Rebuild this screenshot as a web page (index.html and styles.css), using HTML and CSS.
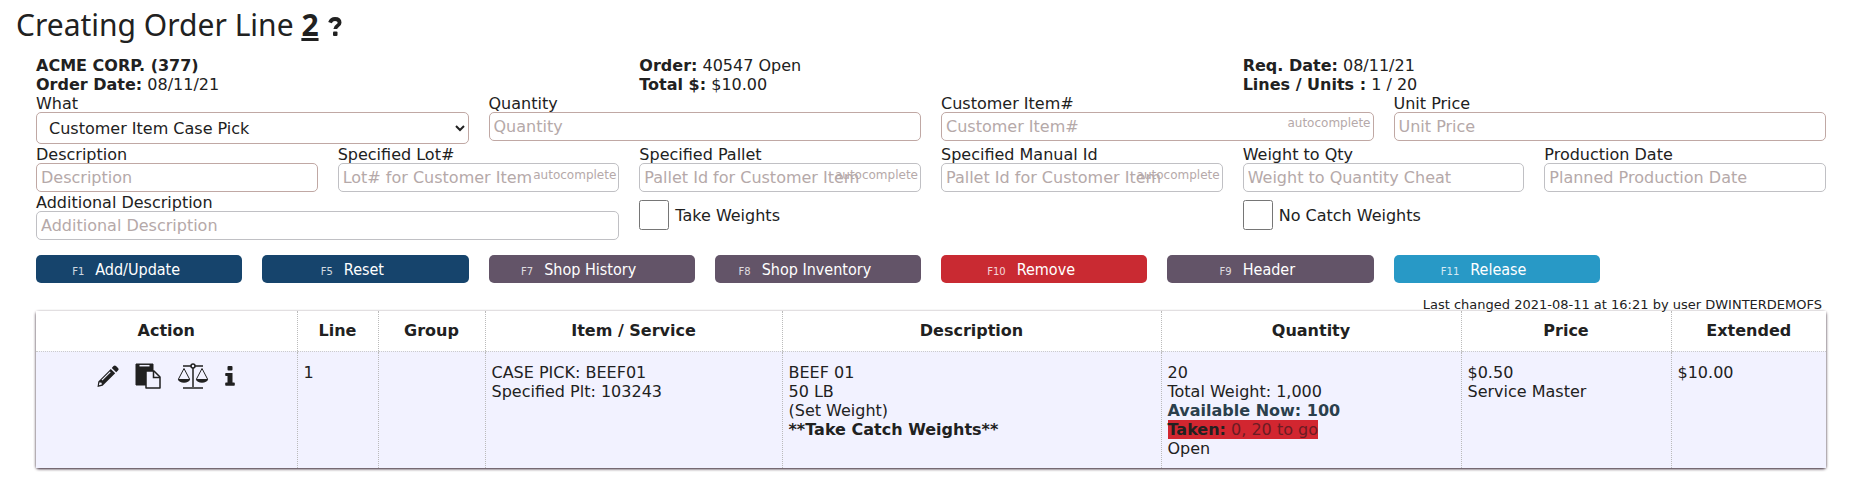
FILE: index.html
```
<!DOCTYPE html>
<html lang="en">
<head>
  <meta charset="UTF-8">
  <meta name="viewport" content="width=device-width, initial-scale=1.0">
  <title>Creating Order Line</title>
  <link rel="stylesheet" href="styles.css">
</head>
<body>
  <h1>Creating Order Line <b class="line-no">2</b>
    <a class="help" href="#" aria-label="Help"><svg width="14" height="19" viewBox="0 0 14 19"><path d="M2 5.6C3 3 4.800 2 7 2c2.800 0 4.600 1.400 4.600 3.700 0 3.300-4.300 2.800-4.300 6.300" fill="none" stroke="#212121" stroke-width="3.800"/><rect x="5" y="14.500" width="4.500" height="4.500" rx="1" fill="#212121"/></svg></a>
  </h1>

  <form class="order-form">
    <div class="row thirds info">
      <div><b>ACME CORP. (377)</b><br><b>Order Date:</b> 08/11/21</div>
      <div><b>Order:</b> 40547 Open<br><b>Total $:</b> $10.00</div>
      <div><b>Req. Date:</b> 08/11/21<br><b>Lines / Units :</b> 1 / 20</div>
    </div>

    <div class="row quarters">
      <div class="field">
        <label for="what">What</label>
        <select id="what" class="required"><option>Customer Item Case Pick</option></select>
      </div>
      <div class="field">
        <label for="quantity">Quantity</label>
        <input type="text" id="quantity" class="required" placeholder="Quantity">
      </div>
      <div class="field">
        <label for="item">Customer Item#</label>
        <input type="text" id="item" class="required" placeholder="Customer Item#">
        <span class="auto">autocomplete</span>
      </div>
      <div class="field">
        <label for="price">Unit Price</label>
        <input type="text" id="price" class="required" placeholder="Unit Price">
      </div>
    </div>

    <div class="row sixths">
      <div class="field">
        <label for="description">Description</label>
        <input type="text" id="description" class="required" placeholder="Description">
      </div>
      <div class="field">
        <label for="lot">Specified Lot#</label>
        <input type="text" id="lot" placeholder="Lot# for Customer Item">
        <span class="auto">autocomplete</span>
      </div>
      <div class="field">
        <label for="pallet">Specified Pallet</label>
        <input type="text" id="pallet" placeholder="Pallet Id for Customer Item">
        <span class="auto">autocomplete</span>
      </div>
      <div class="field">
        <label for="manual">Specified Manual Id</label>
        <input type="text" id="manual" placeholder="Pallet Id for Customer Item">
        <span class="auto">autocomplete</span>
      </div>
      <div class="field">
        <label for="weight">Weight to Qty</label>
        <input type="text" id="weight" placeholder="Weight to Quantity Cheat">
      </div>
      <div class="field">
        <label for="production">Production Date</label>
        <input type="text" id="production" placeholder="Planned Production Date">
      </div>
    </div>

    <div class="row thirds">
      <div class="field">
        <label for="additional">Additional Description</label>
        <input type="text" id="additional" placeholder="Additional Description">
      </div>
      <div class="check">
        <input type="checkbox" id="take"><label for="take">Take Weights</label>
      </div>
      <div class="check">
        <input type="checkbox" id="nocatch"><label for="nocatch">No Catch Weights</label>
      </div>
    </div>

    <div class="row eighths buttons">
      <button type="button" class="blue"><small>F1</small>Add/Update</button>
      <button type="button" class="blue"><small>F5</small>Reset</button>
      <button type="button" class="purple"><small>F7</small>Shop History</button>
      <button type="button" class="purple"><small>F8</small>Shop Inventory</button>
      <button type="button" class="red"><small>F10</small>Remove</button>
      <button type="button" class="purple"><small>F9</small>Header</button>
      <button type="button" class="sky"><small>F11</small>Release</button>
    </div>
  </form>

  <div class="changed">Last changed 2021-08-11 at 16:21 by user DWINTERDEMOFS</div>

  <div class="table-wrap">
    <table>
      <colgroup>
        <col class="c-action"><col class="c-line"><col class="c-group"><col class="c-item">
        <col class="c-desc"><col class="c-qty"><col class="c-price"><col class="c-ext">
      </colgroup>
      <thead>
        <tr>
          <th>Action</th><th>Line</th><th>Group</th><th>Item / Service</th>
          <th>Description</th><th>Quantity</th><th>Price</th><th>Extended</th>
        </tr>
      </thead>
      <tbody>
        <tr>
          <td>
            <div class="actions">
              <a href="#" aria-label="Edit"><svg width="22" height="22" viewBox="0 0 22 22" fill="#212121"><path d="M14.800 2.900l4.400 4.400L21 5.500q1.300-1.200 0-2.500L19 1.100q-1.200-1.200-2.500 0z"/><path fill-rule="evenodd" d="M13.800 3.900l4.400 4.400L5.600 20.800 0.500 22l.8-5.500zM12.900 6.500L4.600 14.800l.8.800 8.300-8.300zM2.500 17.300l-.6 2.900 2.900-.7-.2-1.700-1.600-.2z"/></svg></a>
              <a href="#" aria-label="Copy"><svg width="26" height="26" viewBox="0 0 26 26"><path d="M1 1h17v9h-6v12H1z" fill="#212121" stroke="#212121" stroke-linejoin="round"/><path d="M4.500 2.700h10" stroke="#f2f2ff" stroke-width="1.500"/><path d="M11 8h8l6 6v11H11z" fill="#f2f2ff" stroke="#212121" stroke-width="1.500" stroke-linejoin="round"/><path d="M18.500 8v6.500H25" fill="none" stroke="#212121" stroke-width="1.500"/></svg></a>
              <a href="#" aria-label="Weigh"><svg width="32" height="26" viewBox="0 0 32 26" fill="none" stroke="#212121"><path d="M6 3h20M16 5v19M6 25h20" stroke-width="1.500"/><circle cx="16" cy="3" r="2" fill="#f2f2ff" stroke-width="1.500"/><path d="M1.500 16L7 5.500 12.500 16M19.500 16L25 5.500 30.500 16"/><path d="M.8 16h12.400c-1 5-11.400 5-12.400 0zM18.800 16h12.400c-1 5-11.400 5-12.400 0z" fill="#212121" stroke="none"/></svg></a>
              <a href="#" aria-label="Info"><svg width="10" height="20" viewBox="0 0 10 20" fill="#212121"><rect x="2.500" y="0" width="5" height="4.500" rx="1"/><path d="M1 7h6.500v9.500H9q.8 0 .8 .8V19q0 .8-.8 .8H1q-.8 0-.8-.8v-1.700q0-.8 .8-.8h1.500V10H1q-.8 0-.8-.8V7.800Q.2 7 1 7z"/></svg></a>
            </div>
          </td>
          <td>1</td>
          <td></td>
          <td>CASE PICK: BEEF01<br>Specified Plt: 103243</td>
          <td>BEEF 01<br>50 LB<br>(Set Weight)<br><b>**Take Catch Weights**</b></td>
          <td>20<br>Total Weight: 1,000<br><b class="available">Available Now: 100</b><br><span class="taken"><b>Taken:</b> 0, 20 to go</span><br>Open</td>
          <td>$0.50<br>Service Master</td>
          <td>$10.00</td>
        </tr>
      </tbody>
    </table>
  </div>
</body>
</html>
```
FILE: styles.css
```
* {
  box-sizing: border-box;
}

body {
  margin: 0;
  padding: 0 29px 8px 36px;
  font-family: Verdana, "DejaVu Sans", sans-serif;
  font-size: 16px;
  line-height: 19px;
  color: #212121;
  background: #fff;
}

h1 {
  margin: 0 0 6px -20px;
  font-family: "Segoe UI", "Noto Sans", sans-serif;
  font-size: 30px;
  font-weight: normal;
  line-height: 50px;
}

.line-no {
  text-decoration: underline;
}

.help svg {
  margin-left: 2px;
}

.row {
  display: grid;
  column-gap: 20px;
  margin-bottom: 1px;
}

.thirds {
  grid-template-columns: repeat(3, 1fr);
}

.quarters {
  grid-template-columns: repeat(4, 1fr);
}

.sixths {
  grid-template-columns: repeat(6, 1fr);
}

.eighths {
  grid-template-columns: repeat(8, 1fr);
}

.info {
  margin-bottom: 0;
}

.field {
  position: relative;
}

.field label {
  display: block;
  margin-bottom: -2px;
  line-height: 20px;
}

.field input,
.field select {
  display: block;
  width: 100%;
  height: 29px;
  padding: 0 4px;
  font: inherit;
  color: #212121;
  background: #fff;
  border: 1px solid #c0c0c4;
  border-radius: 5px;
}

.field select {
  height: 32px;
  padding: 0 0 0 8px;
}

.field .required {
  border-color: #c0a8a4;
}

.field input::placeholder {
  color: #b5a9a9;
}

.auto {
  position: absolute;
  top: 20px;
  right: 3px;
  font-size: 12px;
  color: #b5a9a9;
}

.sixths .auto {
  top: 21px;
}

.check {
  display: flex;
  align-items: center;
  gap: 6px;
  padding-bottom: 3px;
}

.check input {
  width: 30px;
  height: 30px;
  margin: 0;
}

.buttons {
  margin: 15px 0 15px;
}

button {
  height: 28px;
  padding: 0 26px 0 0;
  font-family: Tahoma, "DejaVu Sans Condensed", "DejaVu Sans", sans-serif;
  font-stretch: condensed;
  font-size: 16px;
  color: #fff;
  border: none;
  border-radius: 5px;
  cursor: pointer;
}

button small {
  margin-right: 11px;
  font-family: Verdana, "DejaVu Sans", sans-serif;
  font-size: 10px;
  font-stretch: normal;
  opacity: 0.8;
}

.blue {
  background: #16446c;
}

.purple {
  background: #635468;
}

.red {
  background: #c92a32;
}

.sky {
  background: #2899c6;
}

.changed {
  margin-right: 4px;
  font-size: 13px;
  line-height: 13px;
  text-align: right;
}

.table-wrap {
  border-radius: 3px;
  box-shadow: 0 1px 3px #2c1a28;
}

table {
  width: 100%;
  table-layout: fixed;
  border-collapse: collapse;
  background: #fff;
}

th {
  height: 40px;
  padding: 0;
  border-left: 1px dotted #bbb;
  border-bottom: 1px dotted #ccc;
}

td {
  padding: 11px 6px 10px;
  vertical-align: top;
  background: #f2f2ff;
  border-left: 1px dotted #bbb;
}

th:first-child,
td:first-child {
  border-left: none;
}

.c-action { width: 261px; }
.c-line { width: 81px; }
.c-group { width: 107px; }
.c-item { width: 297px; }
.c-desc { width: 379px; }
.c-qty { width: 300px; }
.c-price { width: 210px; }
.c-ext { width: 155px; }

.actions {
  display: flex;
  justify-content: center;
  align-items: center;
  gap: 16px;
}

.actions a,
.actions svg {
  display: block;
}

.available {
  color: #2b3f4c;
}

.taken {
  color: #6a1c24;
  background: #d22630;
}

.taken b {
  color: #212121;
}
```
